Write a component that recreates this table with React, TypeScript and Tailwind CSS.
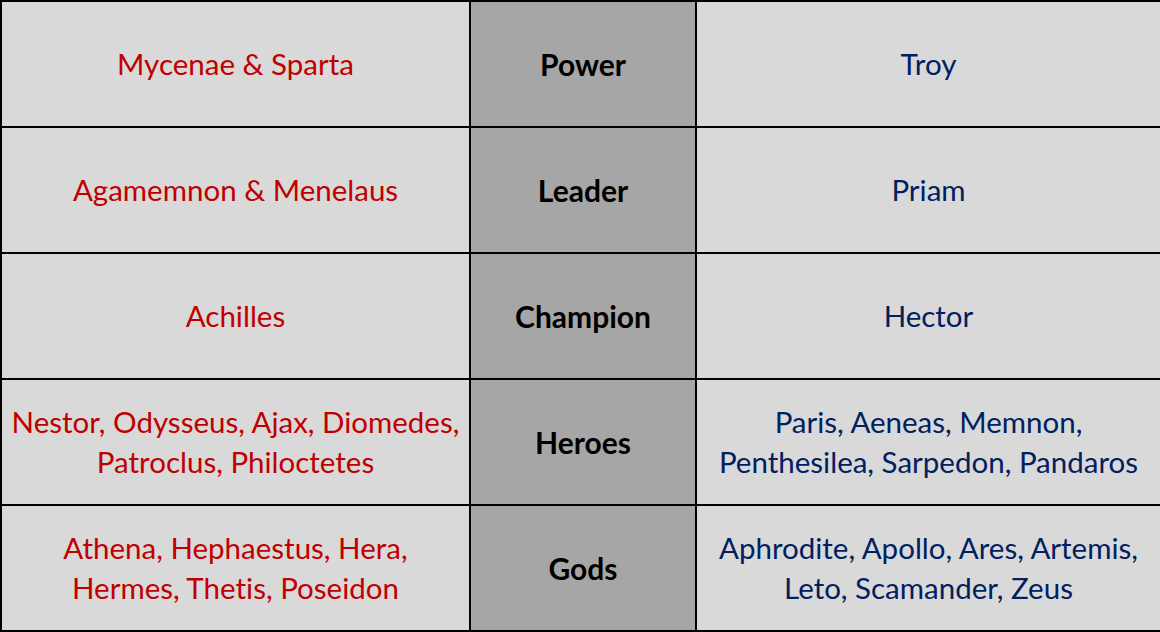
const rows = [
  { left: ["Mycenae & Sparta"], label: "Power", right: ["Troy"] },
  { left: ["Agamemnon & Menelaus"], label: "Leader", right: ["Priam"] },
  { left: ["Achilles"], label: "Champion", right: ["Hector"] },
  {
    left: ["Nestor, Odysseus, Ajax, Diomedes,", "Patroclus, Philoctetes"],
    label: "Heroes",
    right: ["Paris, Aeneas, Memnon,", "Penthesilea, Sarpedon, Pandaros"],
  },
  {
    left: ["Athena, Hephaestus, Hera,", "Hermes, Thetis, Poseidon"],
    label: "Gods",
    right: ["Aphrodite, Apollo, Ares, Artemis,", "Leto, Scamander, Zeus"],
  },
];

const Lines = ({ lines }: { lines: string[] }) => (
  <div className="flex flex-col items-center">
    {lines.map((l) => (
      <span key={l} className="whitespace-nowrap">
        {l}
      </span>
    ))}
  </div>
);

export default function App() {
  return (
    <div className="w-[1160px] h-[632px] overflow-hidden bg-white">
      <div
        className="grid grid-cols-[467px_224px_1fr] grid-rows-[repeat(5,124px)] gap-[2px] bg-black p-[2px] pr-0 text-[29.5px] leading-[40px] [font-variant-ligatures:none]"
        style={{ fontFamily: "Lato, 'Open Sans', sans-serif" }}
      >
        {rows.map((r) => (
          <div key={r.label} className="contents">
            <div className="flex items-center justify-center bg-[#d9d9d9] text-[#c00000]">
              <Lines lines={r.left} />
            </div>
            <div className="flex items-center justify-center bg-[#a6a6a6] text-[30px] font-bold text-black">
              {r.label}
            </div>
            <div className="flex items-center justify-center bg-[#d9d9d9] text-[#002060]">
              <Lines lines={r.right} />
            </div>
          </div>
        ))}
      </div>
    </div>
  );
}
